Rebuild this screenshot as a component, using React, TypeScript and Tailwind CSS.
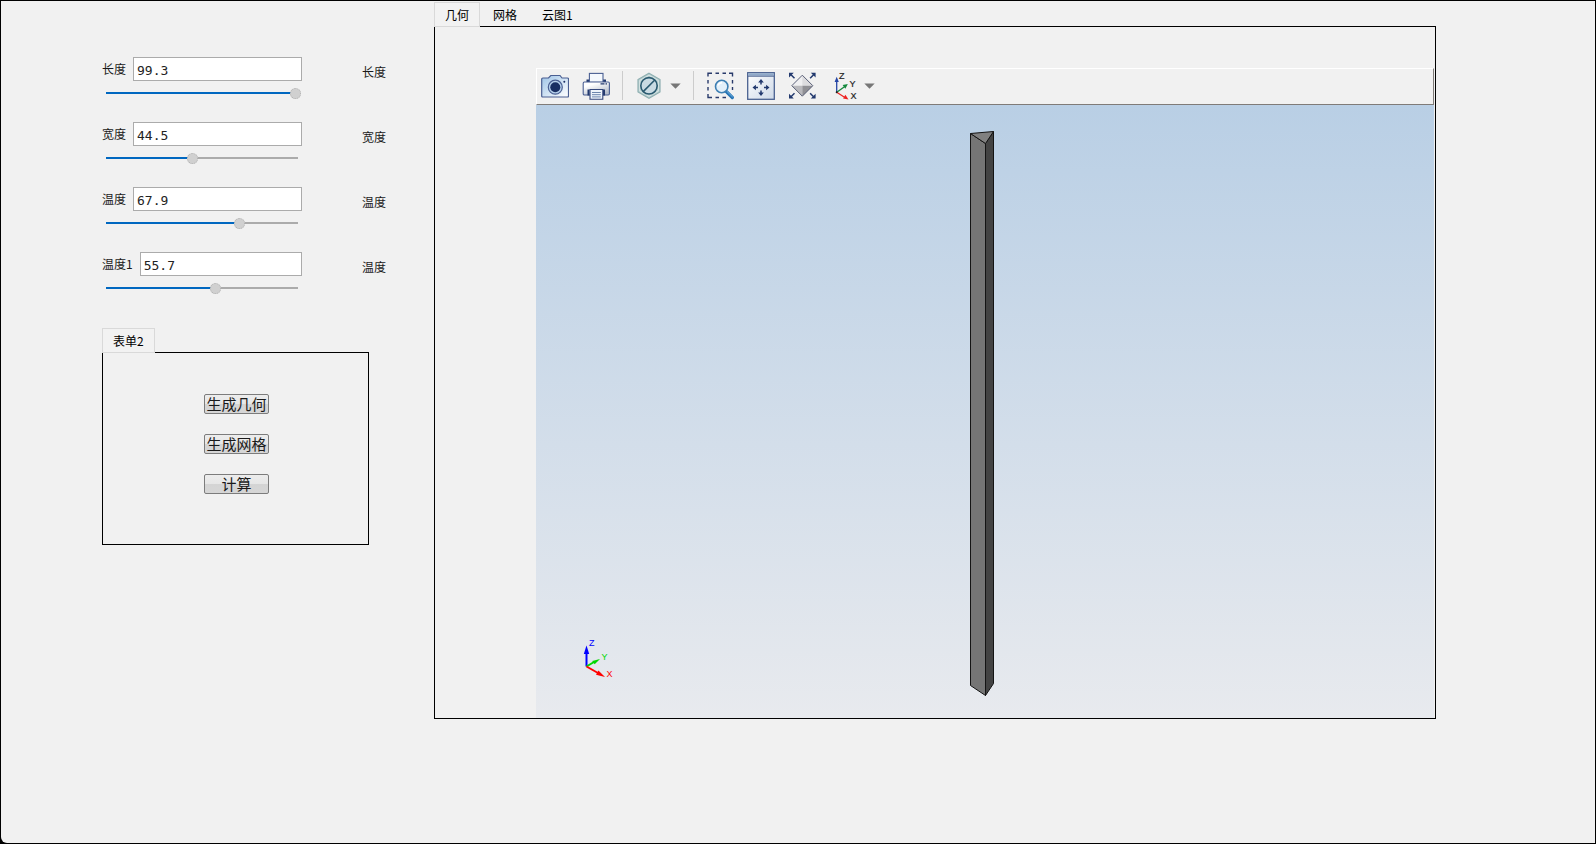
import { useState } from "react"
import type { CSSProperties } from "react"

const fields = [
    { id: "length", label: "长度", unit: "长度", text: "99.3", pos: 99.3 },
    { id: "width", label: "宽度", unit: "宽度", text: "44.5", pos: 45 },
    { id: "temp", label: "温度", unit: "温度", text: "67.9", pos: 70 },
    { id: "temp1", label: "温度1", unit: "温度", text: "55.7", pos: 57 },
]

const tabs = ["几何", "网格", "云图1"]

const Field = ({ id, label, unit, text, pos }: (typeof fields)[number]) => {
    const [value, setValue] = useState(text)
    const [slider, setSlider] = useState(pos)

    const onSlide = (v: string) => {
        setSlider(Number(v))
        setValue(Number(v).toFixed(1))
    }

    return (
        <div className="flex">
            <div className="w-[200px]">
                <div className="flex items-center gap-[7px]">
                    <label htmlFor={id} className="shrink-0 leading-4">{label}</label>
                    <input
                        id={id}
                        value={value}
                        onChange={(e) => setValue(e.target.value)}
                        className="h-6 w-0 min-w-0 flex-1 border border-[#ababab] bg-white px-[3px] pt-0.5 font-['DejaVu_Sans_Mono',monospace] text-[13px] text-[#222] outline-none"
                    />
                </div>
                <input
                    id={id + "-slider"}
                    type="range"
                    min={0}
                    max={100}
                    step={0.1}
                    value={slider}
                    onChange={(e) => onSlide(e.target.value)}
                    style={{ "--fill": slider + "%" } as CSSProperties}
                    className="mt-1.5 block h-3 w-full appearance-none bg-[linear-gradient(to_right,#0067c0_var(--fill),#ababab_var(--fill))] bg-[length:calc(100%-8px)_2px] bg-center bg-no-repeat [&::-webkit-slider-thumb]:size-[11px] [&::-webkit-slider-thumb]:appearance-none [&::-webkit-slider-thumb]:rounded-full [&::-webkit-slider-thumb]:border [&::-webkit-slider-thumb]:border-dotted [&::-webkit-slider-thumb]:border-[#b0b0b0] [&::-webkit-slider-thumb]:bg-[#d0d0d0]"
                />
            </div>
            <label htmlFor={id + "-slider"} className="mt-[7px] ml-[60px] leading-4">{unit}</label>
        </div>
    )
}

const ActionButton = ({ text }: { text: string }) => (
    <button className="flex h-5 w-[65px] items-center justify-center rounded-[2px] border border-[#7c7c7c] bg-[linear-gradient(#ededed_0%,#e6e6e6_50%,#d4d4d4_50%,#d6d6d6_100%)] text-[15px] leading-4 whitespace-nowrap text-[#1a1a1a]">
        {text}
    </button>
)

const CameraIcon = () => (
    <svg viewBox="0 0 28 28" className="size-7">
        <defs>
            <linearGradient id="cam" x1="0" y1="0" x2="1" y2="1">
                <stop offset="0" stopColor="#9dc3e6" />
                <stop offset="0.6" stopColor="#d9e8f6" />
                <stop offset="1" stopColor="#ffffff" />
            </linearGradient>
        </defs>
        <path d="M1.8 6H7.5L9.8 3.5H19L21 6H26.5Q27.5 6 27.5 7V24Q27.5 25 26.5 25H1.8Q.7 25 .7 24V7Q.7 6 1.8 6Z" fill="url(#cam)" stroke="#4a5f92" strokeWidth="1.2" />
        <circle cx="14.3" cy="15.2" r="7" fill="#b5cfea" stroke="#4a5f92" strokeWidth="1.2" />
        <circle cx="14.3" cy="15.2" r="5" fill="#182e62" />
        <circle cx="23.3" cy="9.7" r="1" fill="#182e62" />
    </svg>
)

const PrinterIcon = () => (
    <svg viewBox="0 0 28 28" className="size-7">
        <defs>
            <linearGradient id="prn" x1="0" y1="0" x2="0.6" y2="1">
                <stop offset="0.3" stopColor="#ffffff" />
                <stop offset="1" stopColor="#b4bccb" />
            </linearGradient>
        </defs>
        <path d="M4.5 7.5H8V10H4.5ZM20.5 7.5H24V10H20.5Z" fill="#22396e" />
        <rect x="7.4" y="1.4" width="13.6" height="9" fill="#f4f8fd" stroke="#4a5f92" strokeWidth="1.1" />
        <rect x="1.2" y="10" width="26.2" height="13" rx="1.2" fill="url(#prn)" stroke="#4a5f92" strokeWidth="1.1" />
        <path d="M18.5 11.8H25" stroke="#22396e" strokeWidth="1.2" strokeDasharray="4 1" />
        <path d="M5.5 17.5H7.5V23.5H5.5ZM21 17.5H23V23.5H21Z" fill="#22396e" />
        <path d="M8 17.5H20.8V27.3H8Z" fill="#eef4fb" stroke="#34477c" strokeWidth="1.1" />
        <path d="M10 20.5H18.8M10 22.7H18.8M10 24.9H18.8" stroke="#6d86ad" strokeWidth="1" />
    </svg>
)

const HideIcon = () => (
    <svg viewBox="0 0 28 28" className="size-7">
        <path d="M14 1.3 25 7.5V20L14 26.3 3 20V7.5Z" fill="#b9cfd0" stroke="#8fb0b2" strokeWidth="1.2" />
        <path d="M14 3.2 23.3 8.5V19L14 24.3 4.7 19V8.5Z" fill="none" stroke="#d8e6e6" strokeWidth="1" />
        <circle cx="14" cy="13.8" r="8.2" fill="#c9dbe3" stroke="#2a5a70" strokeWidth="1.6" />
        <path d="M8.2 19.6 19.8 8" stroke="#2a5a70" strokeWidth="1.6" />
    </svg>
)

const ZoomAreaIcon = () => (
    <svg viewBox="0 0 28 28" className="size-7">
        <path
            d="M2 4.5V1.3H6M9.5 1.3H13M16.5 1.3H20M23 1.3H26.5V4.5M26.5 8V11.5M2 8V11.5M2 15V18.5M2 22V25.5H6M9.5 25.5H13M16.5 25.5H20M26.5 15V18"
            fill="none"
            stroke="#283a6b"
            strokeWidth="1.4"
        />
        <path d="M20.3 19.5 26.3 25.5" stroke="#2473b5" strokeWidth="3.2" strokeLinecap="round" />
        <path d="M20.8 19.2 26.4 24.8" stroke="#78b5e0" strokeWidth="1" strokeLinecap="round" />
        <circle cx="15.7" cy="14.5" r="6.2" fill="#e3f0fa" stroke="#3d7fb3" strokeWidth="1.6" />
        <path d="M12 13.5Q13 10.8 16 10.8" fill="none" stroke="#fff" strokeWidth="1.5" />
    </svg>
)

const PanIcon = () => (
    <svg viewBox="0 0 28 28" className="size-7">
        <defs>
            <linearGradient id="pan" x1="0" y1="0" x2="1" y2="1">
                <stop offset="0" stopColor="#ffffff" />
                <stop offset="1" stopColor="#ced9e8" />
            </linearGradient>
        </defs>
        <rect x="0.7" y="0.7" width="26.6" height="26.6" fill="url(#pan)" stroke="#4a6190" strokeWidth="1.3" />
        <path d="M1.3 1.3H26.7V3.7H1.3Z" fill="#8fa9c9" />
        <path d="M1 4.2H27" stroke="#4a6190" strokeWidth="1" />
        <path d="M14 12.5V9M14 18.5V22M11 15.5H7.5M17 15.5H20.5" stroke="#22396e" strokeWidth="1.5" />
        <path d="M14 7 16.8 10.4H11.2ZM14 24 16.8 20.6H11.2ZM5.5 15.5 8.9 12.7V18.3ZM22.5 15.5 19.1 12.7V18.3Z" fill="#22396e" />
    </svg>
)

const FitIcon = () => (
    <svg viewBox="0 0 28 28" className="size-7">
        <path d="M14.3 3.2 3.8 13.7H24.8Z" fill="#efeff1" />
        <path d="M14.3 3.2V13.7H24.8Z" fill="#dcdcdf" />
        <path d="M14.3 24.2 3.8 13.7H14.3Z" fill="#b9b9bd" />
        <path d="M14.3 24.2V13.7H24.8Z" fill="#909095" />
        <path d="M14.3 3.2 24.8 13.7 14.3 24.2 3.8 13.7Z" fill="none" stroke="#5a6078" strokeWidth="1" />
        <path d="M6.5 6.2 3 2.7M22.1 6.2 25.6 2.7M6.5 21.2 3 24.7M22.1 21.2 25.6 24.7" stroke="#22396e" strokeWidth="1.5" />
        <path d="M1 .8H5.8L1 5.6ZM27.6 .8V5.6L22.8 .8ZM1 26.6V21.8L5.8 26.6ZM27.6 26.6H22.8L27.6 21.8Z" fill="#22396e" />
    </svg>
)

const AxesIcon = () => (
    <svg viewBox="0 0 28 28" className="size-7 overflow-visible">
        <g strokeWidth="1.3">
            <path d="M7.7 20.3V9" stroke="#2545a5" />
            <path d="M7.7 20.3 15.5 14.7" stroke="#15893d" />
            <path d="M7.7 20.3 15.5 25.2" stroke="#e22" />
        </g>
        <path d="M7.7 4.8 9.8 10H5.6Z" fill="#2545a5" />
        <path d="M18.8 12 16.4 16.8 13.6 13Z" fill="#15893d" />
        <path d="M19.5 27.5 14.1 26.6 16.4 22.8Z" fill="#e22" />
        <circle cx="7.7" cy="20.3" r="1" fill="#222" />
        <g className="font-['Liberation_Sans',sans-serif] text-[9px]" fill="#222" stroke="#222" strokeWidth="0.2">
            <text x="10" y="6.5">Z</text>
            <text x="20.5" y="14.5">Y</text>
            <text x="21.5" y="27">X</text>
        </g>
    </svg>
)

const Caret = () => (
    <svg viewBox="0 0 11 6" className="h-1.5 w-[11px]">
        <path d="M.3 .5H10.7L5.5 5.8Z" fill="#777" />
    </svg>
)

const Separator = () => <div className="-mx-px h-[29px] w-px bg-[#cccccc]" />

const Toolbar = () => (
    <div className="flex h-[37px] items-center gap-[13px] border border-t-white border-r-[#7f7b78] border-b-[#7f7b78] border-l-white pb-0.5 pl-1">
        <button aria-label="截图"><CameraIcon /></button>
        <button aria-label="打印"><PrinterIcon /></button>
        <Separator />
        <button aria-label="隐藏" className="flex items-center gap-[7px]"><HideIcon /><Caret /></button>
        <Separator />
        <button aria-label="框选缩放"><ZoomAreaIcon /></button>
        <button aria-label="平移"><PanIcon /></button>
        <button aria-label="适应窗口"><FitIcon /></button>
        <button aria-label="视图方向" className="flex items-center gap-[7px]"><AxesIcon /><Caret /></button>
    </div>
)

// triangular bar, 565px tall
const Prism = () => (
    <svg viewBox="0 0 34 568" className="h-[568px] w-[34px]" stroke="#141414" strokeLinejoin="round">
        <path d="M2.5 3.5V555.5L17.5 565.5V13.5Z" fill="#757575" />
        <path d="M17.5 13.5V565.5L25.5 553.5V1.5Z" fill="#434343" />
        <path d="M2.5 3.5 25.5 1.5 17.5 13.5Z" fill="#808080" />
    </svg>
)

const Triad = () => (
    <svg viewBox="0 0 40 44" className="absolute bottom-9 left-11 h-11 w-10">
        <path d="M6.5 28.5V12" stroke="#00f" strokeWidth="2" />
        <path d="M6.5 7.5 9.2 16H3.8Z" fill="#00f" />
        <path d="M6.5 28.5 14 24" stroke="#00d800" strokeWidth="2" />
        <path d="M20 21 14.7 26.3 12.2 23Z" fill="#00d800" />
        <path d="M6.5 28.5 18 35" stroke="#f00" strokeWidth="2" />
        <path d="M25 39 16 36.8 18.4 32.4Z" fill="#f00" />
        <g className="font-['Liberation_Sans',sans-serif] text-[9px]">
            <text x="9" y="8" fill="#00f">Z</text>
            <text x="21.5" y="21.5" fill="#00d800">Y</text>
            <text x="26.5" y="38.5" fill="#f00">X</text>
        </g>
    </svg>
)

const App = () => {
    const [active, setActive] = useState(0)

    return (
        <div className="flex min-h-screen bg-black p-px font-['Noto_Sans_CJK_SC',sans-serif] text-xs text-[#1a1a1a]">
            <div className="flex flex-1 rounded-bl-[6px] bg-[#f1f1f1]">

                <aside className="w-[433px] shrink-0 pt-14 pl-[101px]">
                    <div className="flex flex-col gap-[23px]">
                        {fields.map((f) => <Field key={f.id} {...f} />)}
                    </div>

                    <div className="mt-[34px] w-[267px]">
                        <div role="tablist" className="flex">
                            <button role="tab" aria-selected="true" className="relative -mb-px h-[25px] border border-[#d9d9d9] bg-[#f2f2f2] px-2.5 text-black">表单2</button>
                        </div>
                        <div className="flex flex-col items-center gap-5 border border-black pt-[41px] pb-[50px] pl-0.5">
                            <ActionButton text="生成几何" />
                            <ActionButton text="生成网格" />
                            <ActionButton text="计算" />
                        </div>
                    </div>
                </aside>

                <main className="flex min-w-0 flex-1 flex-col pt-px pr-[159px] pb-[124px]">
                    <div role="tablist" className="flex gap-px">
                        {tabs.map((t, i) => (
                            <button
                                key={t}
                                role="tab"
                                aria-selected={i === active}
                                onClick={() => setActive(i)}
                                className={
                                    i === active
                                        ? "relative -mb-px h-[25px] border border-[#d9d9d9] bg-[#f2f2f2] px-2.5 text-black"
                                        : "-mb-px h-[25px] border border-transparent px-[11px] text-black"
                                }
                            >
                                {t}
                            </button>
                        ))}
                    </div>
                    <div className="flex flex-1 flex-col border border-black pt-[41px] pr-px pl-[101px]">
                        <Toolbar />
                        <div className="relative flex flex-1 justify-center bg-linear-to-b from-[#b9cfe5] to-[#e8eaee] pt-[25px]">
                            <Prism />
                            <Triad />
                        </div>
                    </div>
                </main>

            </div>
        </div>
    )
}
export default App
